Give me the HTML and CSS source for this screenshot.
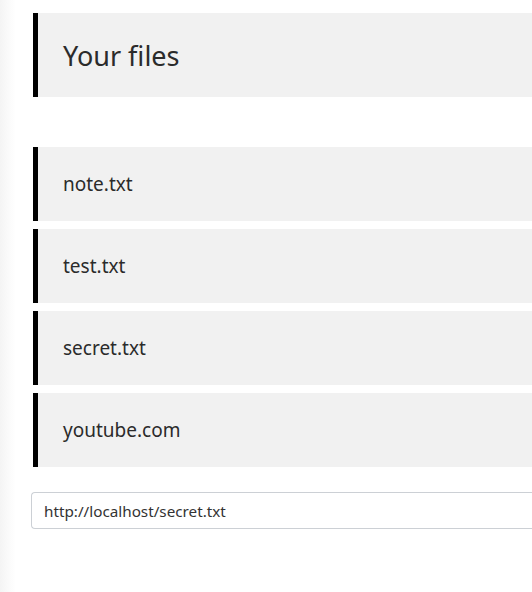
FILE: index.html
```html
<!DOCTYPE html>
<html>
<head>
<meta charset="utf-8">
<link rel="stylesheet" href="styles.css">
</head>
<body>
<div class="page">
  <div class="title-box"><h1 class="title">Your files</h1></div>
  <ul class="files">
    <li class="file">note.txt</li>
    <li class="file">test.txt</li>
    <li class="file">secret.txt</li>
    <li class="file">youtube.com</li>
  </ul>
  <input class="url" type="text" value="http://localhost/secret.txt">
</div>
</body>
</html>
```
FILE: styles.css
```css
html, body {
  margin: 0;
  padding: 0;
  overflow: hidden;
}
body {
  background: linear-gradient(to right, #f4f4f4 0px, #fafafa 8px, #ffffff 16px);
  min-height: 592px;
  font-family: "Noto Sans", "Open Sans", sans-serif;
  color: #2b2b2b;
}
.page {
  padding: 13px 0 0 33px;
  display: flex;
  flex-direction: column;
}
.title-box {
  height: 84px;
  box-sizing: border-box;
  border-left: 5px solid #000;
  background: #f1f1f1;
  padding-left: 25px;
  display: flex;
  align-items: center;
}
.title {
  margin: 0;
  font-size: 27px;
  font-weight: 400;
}
.files {
  list-style: none;
  margin: 50px 0 0 0;
  padding: 0;
  display: flex;
  flex-direction: column;
  gap: 8px;
}
.file {
  height: 74px;
  box-sizing: border-box;
  border-left: 5px solid #000;
  background: #f1f1f1;
  padding-left: 25px;
  display: flex;
  align-items: center;
  font-size: 19px;
}
.url {
  margin: 25px 0 0 -2px;
  height: 37px;
  box-sizing: border-box;
  border: 1px solid #ccd0d5;
  border-right: none;
  border-radius: 4px 0 0 4px;
  padding: 0 12px;
  font-family: "Noto Sans", "Open Sans", sans-serif;
  font-size: 15.25px;
  color: #333;
  background: #fff;
  outline: none;
}
```
